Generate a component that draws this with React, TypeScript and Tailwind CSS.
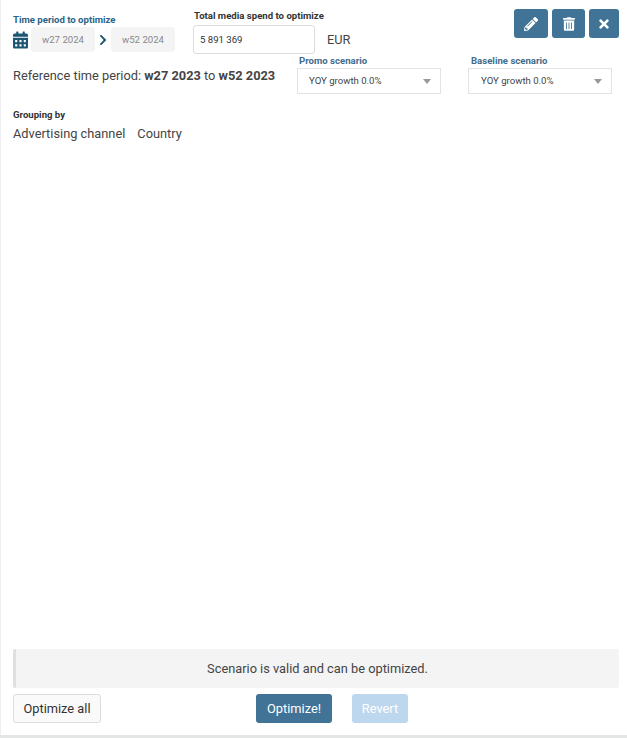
import * as React from 'react';
import { FaCalendarAlt, FaChevronRight, FaPencilAlt, FaTimes, FaTrashAlt } from 'react-icons/fa';

const ScenarioSelect: React.FC<{ label: string; labelClass: string; valueClass: string }> = ({ label, labelClass, valueClass }) => (
  <div className="w-[144px]">
    <div className={`text-[9.6px] leading-[12px] font-bold text-[#3f6d8e] ${labelClass}`}>{label}</div>
    <div className={`mt-[1px] h-[26px] border border-[#e3e3e3] bg-white flex items-center justify-between pr-[9px] ${valueClass}`}>
      <span className="text-[9.6px] text-[#444]">YOY growth 0.0%</span>
      <span className="w-0 h-0 border-x-[4px] border-x-transparent border-t-[5px] border-t-[#999] mt-[1px]" />
    </div>
  </div>
);

const ActionButton: React.FC<{ width: string; children: React.ReactNode }> = ({ width, children }) => (
  <button className={`${width} h-[29px] rounded-[3px] bg-[#417396] text-white flex items-center justify-center`}>
    {children}
  </button>
);

const App: React.FC = () => {
  return (
    <div className="h-[738px] bg-[#e4e6e6] pb-[3px] font-['Roboto',sans-serif] text-[#444]">
      <div className="h-full bg-white border-l border-[#eeeeee] flex flex-col pl-[12px] pr-[8px]">
        {/* Top row */}
        <div className="flex items-start h-[54px]">
          <div className="w-[181px] pt-[14px]">
            <div className="text-[9.6px] leading-[12px] font-bold text-[#2a6488]">Time period to optimize</div>
            <div className="mt-[1px] flex items-center">
              <FaCalendarAlt className="text-[#1d5673] w-[15px] h-[18px]" />
              <div className="ml-[3px] w-[64px] h-[25px] pt-[1px] rounded-[4px] bg-[#f4f4f4] flex items-center justify-center text-[9.6px] text-[#888]">w27 2024</div>
              <FaChevronRight className="mx-[4px] w-[8px] h-[12px] text-[#1d5673]" />
              <div className="w-[64px] h-[25px] pt-[1px] rounded-[4px] bg-[#f4f4f4] flex items-center justify-center text-[9.6px] text-[#888]">w52 2024</div>
            </div>
          </div>
          <div className="w-[320px] pt-[10px]">
            <div className="text-[9.6px] leading-[12px] font-bold text-[#333]">Total media spend to optimize</div>
            <div className="mt-[3px] -ml-[1px] flex items-center">
              <div className="w-[122px] h-[29px] pt-[1px] rounded-[3px] border border-[#dddddd] flex items-center pl-[6px] text-[9.6px] text-[#333]">5 891 369</div>
              <span className="ml-[12px] text-[12.8px] text-[#444]">EUR</span>
            </div>
          </div>
          <div className="ml-auto pt-[9px] flex gap-[4px]">
            <ActionButton width="w-[34px]"><FaPencilAlt className="w-[14px] h-[14px]" /></ActionButton>
            <ActionButton width="w-[33px]"><FaTrashAlt className="w-[12px] h-[14px]" /></ActionButton>
            <ActionButton width="w-[30px]"><FaTimes className="w-[12px] h-[14px]" /></ActionButton>
          </div>
        </div>

        {/* Reference period and scenarios */}
        <div className="flex items-start mt-[1px]">
          <div className="w-[284px] pt-[13px] text-[12.8px] leading-[15px] text-[#444]">
            Reference time period: <b>w27 2023</b> to <b>w52 2023</b>
          </div>
          <ScenarioSelect label="Promo scenario" labelClass="pl-[2px]" valueClass="pl-[11px]" />
          <div className="w-[27px]" />
          <ScenarioSelect label="Baseline scenario" labelClass="pl-[3px]" valueClass="pl-[12px]" />
        </div>

        {/* Grouping */}
        <div className="mt-[15px] text-[9.6px] leading-[12px] font-bold text-[#333]">Grouping by</div>
        <div className="mt-[5px] flex gap-[12px] text-[12.8px] leading-[15px] text-[#444]">
          <span>Advertising channel</span>
          <span>Country</span>
        </div>

        {/* Status and actions */}
        <div className="mt-auto h-[39px] rounded-r-[3px] rounded-l-[2px] bg-[#f4f4f4] border-l-[3px] border-[#e0e0e0] flex items-center justify-center text-[12.8px] text-[#444]">
          Scenario is valid and can be optimized.
        </div>
        <div className="mt-[6px] mb-[12px] flex items-start">
          <button className="w-[88px] h-[29px] rounded-[3px] border border-[#dddddd] bg-[#fafafa] text-[12.8px] text-[#333]">Optimize all</button>
          <button className="ml-[155px] w-[76px] h-[29px] rounded-[3px] bg-[#417396] text-[12.8px] text-white">Optimize!</button>
          <button className="ml-[20px] w-[56px] h-[29px] rounded-[3px] bg-[#bdd7ee] text-[12.8px] text-white">Revert</button>
        </div>
      </div>
    </div>
  );
};

export default App;
